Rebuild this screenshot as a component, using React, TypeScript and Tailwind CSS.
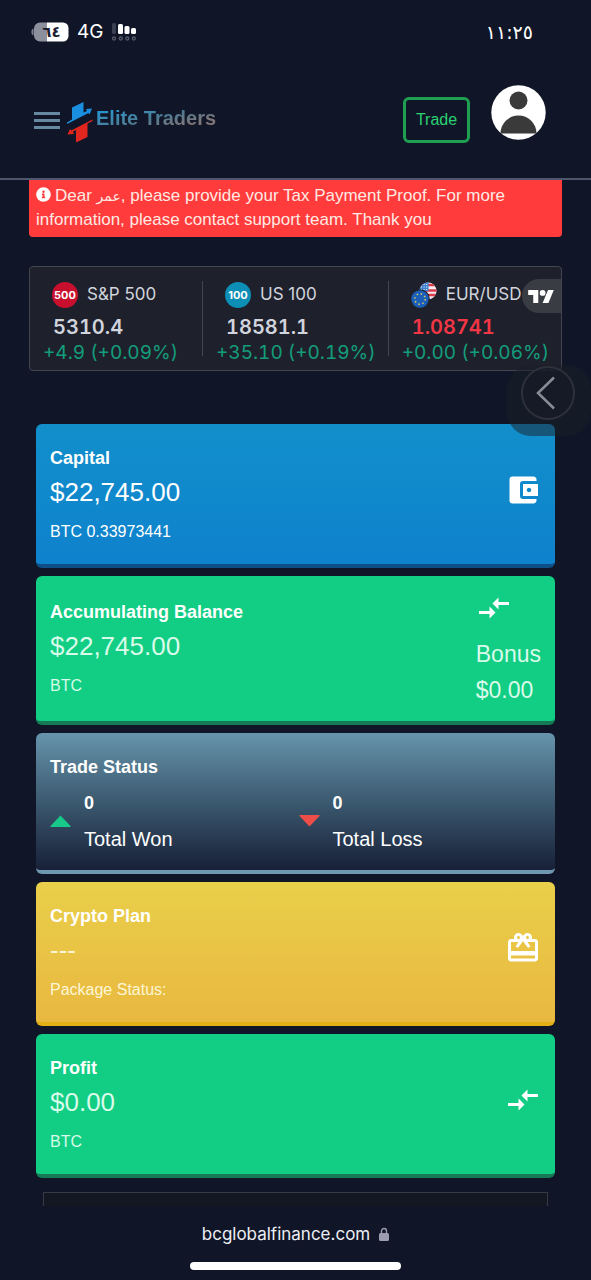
import type { ReactNode } from "react";
import { FaInfoCircle } from "react-icons/fa";
import { MdAccountBalanceWallet, MdCompareArrows, MdRedeem } from "react-icons/md";

function StatusBar() {
  return (
    <div className="flex h-16 items-center justify-between pr-[58px] pl-[31px]">
      <div className="flex items-center">
        <svg width="38" height="20" viewBox="0 0 38 20" aria-hidden="true">
          <path d="M2.500 6.500C1 7 .4 8.400.4 10s.6 3 2.100 3.500z" fill="#7d8290" />
          <path d="M9 .5h7v19H9a6 6 0 0 1-6-6v-7a6 6 0 0 1 6-6z" fill="#8b909c" />
          <path d="M16 .5h16a5.500 5.500 0 0 1 5.500 5.500v8a5.500 5.500 0 0 1-5.500 5.500H16z" fill="#fff" />
          <text x="20.500" y="15" textAnchor="middle" fontSize="15" fontWeight="700" fontFamily="DejaVu Sans, sans-serif" fill="#1b2030">
            ٦٤
          </text>
        </svg>
        <span className="ml-2 font-[Inter,sans-serif] text-[19px] leading-6 text-white">4G</span>
        <svg className="ml-2" width="28" height="20" viewBox="0 0 28 20" aria-hidden="true">
          <rect x="1" y="1" width="4" height="11" rx="1.500" fill="#3a4050" />
          <rect x="7" y="2" width="5" height="10" rx="1.500" fill="#fff" />
          <rect x="13.500" y="4" width="5" height="8" rx="1.500" fill="#fff" />
          <rect x="20" y="6" width="5" height="6" rx="1.500" fill="#fff" />
          <g fill="none" stroke="#555b69" strokeWidth="1.300">
            <circle cx="3" cy="16.500" r="1.500" />
            <circle cx="9.800" cy="16.500" r="1.500" />
            <circle cx="16.300" cy="16.500" r="1.500" />
            <circle cx="22.800" cy="16.500" r="1.500" />
          </g>
        </svg>
      </div>
      <time className="font-['DejaVu_Sans',sans-serif] text-[19px] leading-6 text-white">١١:٢٥</time>
    </div>
  );
}

function LogoMark() {
  return (
    <svg width="26" height="40" viewBox="0 0 26 40" aria-hidden="true">
      <path d="M5 5.500 16.500 0v10.500L20 9l-1-2 6-.5-2.500 6-1-1.500L0 22v-1.500l5-3z" fill="#1a8fe0" />
      <path d="M25.500 17.500V19L20.500 21.500v13.500L9 40.500V28L6 29.500l1 2.500-6.500.5L3 27l1.200 1.500z" fill="#e0261f" />
    </svg>
  );
}

function Header() {
  return (
    <header className="border-b-2 border-[#4d566c]">
      <StatusBar />
      <div className="flex h-[114px] items-start justify-between pr-[45px] pl-[34px]">
        <div className="flex items-center pt-[38px]">
          <button type="button" aria-label="Menu" className="-mt-1 flex w-[26px] flex-col gap-1">
            <span className="h-[3px] w-full bg-[#6688a0]" />
            <span className="h-[3px] w-full bg-[#6688a0]" />
            <span className="h-[3px] w-full bg-[#6688a0]" />
          </button>
          <a href="#home" className="ml-[7px] flex items-center gap-[3px]">
            <LogoMark />
            <span className="-mt-2 bg-linear-to-br from-[#129ad8] from-10% via-[#4c7a92] via-50% to-[#7f7678] to-75% bg-clip-text text-[20px] leading-7 font-bold text-transparent">
              Elite Traders
            </span>
          </a>
        </div>
        <div className="flex items-start gap-[21px] pt-[21px]">
          <button
            type="button"
            className="mt-3 h-[46px] w-[67px] rounded-md border-3 border-[#1f9f52] text-base text-[#2bd173]"
          >
            Trade
          </button>
          <button type="button" aria-label="Account">
            <svg width="55" height="55" viewBox="0 0 55 55" aria-hidden="true">
              <circle cx="27.500" cy="27.500" r="27.200" fill="#fff" />
              <circle cx="27.500" cy="15.500" r="9" fill="#3a3a3a" />
              <path d="M9.500 48.500a18 18 0 0 1 36 0z" fill="#3a3a3a" />
            </svg>
          </button>
        </div>
      </div>
    </header>
  );
}

function EuroDollarIcon() {
  return (
    <svg width="26" height="26" viewBox="0 0 26 26" aria-hidden="true">
      <defs>
        <clipPath id="usd">
          <circle cx="17" cy="9" r="8.500" />
        </clipPath>
      </defs>
      <g clipPath="url(#usd)">
        <rect x="8" width="18" height="18" fill="#f3eef2" />
        <path d="M8 3h18M8 8.500h18M8 13h18" stroke="#dc3a4c" strokeWidth="2.400" />
        <rect x="8" width="9.500" height="9" fill="#3d7fcf" />
        <path d="M10 2.500h7M10 5h7M10 7.500h7" stroke="#fff" strokeDasharray="1 1.600" />
      </g>
      <circle cx="9" cy="17" r="9.800" fill="#1e222d" />
      <circle cx="9" cy="17" r="8.700" fill="#1c5fb8" />
      <circle cx="9" cy="17" r="5.200" fill="none" stroke="#d9cf5a" strokeWidth="1.500" strokeDasharray="1.500 2.584" />
    </svg>
  );
}

function RoundBadge({ className, children }: { className: string; children: ReactNode }) {
  return (
    <span
      className={`flex size-[26px] items-center justify-center rounded-full text-[11px] font-bold text-white ${className}`}
    >
      {children}
    </span>
  );
}

type Quote = { name: string; price: string; change: string; down?: boolean; icon: ReactNode };

const quotes: Quote[] = [
  { name: "S&P 500", price: "5310.4", change: "+4.9 (+0.09%)", icon: <RoundBadge className="bg-[#c8102e]">500</RoundBadge> },
  { name: "US 100", price: "18581.1", change: "+35.10 (+0.19%)", icon: <RoundBadge className="bg-[#0c8eb5]">100</RoundBadge> },
  { name: "EUR/USD", price: "1.08741", change: "+0.00 (+0.06%)", down: true, icon: <EuroDollarIcon /> },
];

function Ticker() {
  return (
    <section
      aria-label="Market quotes"
      className="relative mx-[29px] mt-[29px] flex overflow-hidden rounded border border-[#434651] bg-[#1e212c] pt-[14px] pb-[5px] font-[Inter,sans-serif]"
    >
      {quotes.map((q) => (
        <div key={q.name} className="flex shrink-0">
          <div className="min-w-[172px] pr-3 pl-[13px] whitespace-nowrap">
            <div className="flex h-7 items-center gap-[9px] pl-[9px]">
              {q.icon}
              <span className="text-[17px] text-[#d1d4dc]">{q.name}</span>
            </div>
            <div
              className={`mt-1 pl-[10px] text-xl leading-7 font-semibold tabular-nums ${q.down ? "text-[#f23645]" : "text-[#d1d4dc]"}`}
            >
              {q.price}
            </div>
            <div className="text-[19px] leading-6 text-[#149d7b] tabular-nums">{q.change}</div>
          </div>
          {!q.down && <div className="h-[75px] w-px bg-[#434651]" />}
        </div>
      ))}
      <a
        href="#chart"
        aria-label="TradingView"
        className="absolute top-3 right-0 flex h-[34px] w-[39px] items-center rounded-l-full bg-[#3a3c44] pl-[6px]"
      >
        <svg width="26" height="13" viewBox="0 4 35.500 18" fill="#fff" aria-hidden="true">
          <path d="M14 22H7V11H0V4h14v18zM28 22h-8l7.500-18h8L28 22z" />
          <circle cx="20" cy="8" r="4" />
        </svg>
      </a>
    </section>
  );
}

function BackBubble() {
  return (
    <div className="absolute top-[185px] right-0 flex h-[71px] w-[84px] items-center justify-end rounded-[24px] bg-[#1a1d28]/50 pr-4 pb-[15px]">
      <button
        type="button"
        aria-label="Back"
        className="flex size-[54px] items-center justify-center rounded-full border-2 border-[#2e303a] bg-[#171b28]/70"
      >
        <svg className="mr-1" width="20" height="34" viewBox="0 0 20 34" fill="none" aria-hidden="true">
          <path d="M18 1.500 2 17l16 15.500" stroke="#8a8c95" strokeWidth="2.500" />
        </svg>
      </button>
    </div>
  );
}

type CardProps = {
  title: string;
  amount: string;
  note: string;
  className: string;
  textClass?: string;
  children: ReactNode;
};

function BalanceCard({ title, amount, note, className, textClass = "text-white", children }: CardProps) {
  return (
    <section className={`flex justify-between rounded-md border-b-4 px-[14px] ${className}`}>
      <div className={textClass}>
        <h2 className="text-lg leading-7 font-bold text-white">{title}</h2>
        <p className="text-[26px] leading-10">{amount}</p>
        <p className="text-base leading-10">{note}</p>
      </div>
      {children}
    </section>
  );
}

function TradeCount({ label, count, won }: { label: string; count: number; won?: boolean }) {
  return (
    <div className="flex items-center gap-[13px]">
      <svg width="21" height="12" viewBox="0 0 21 12" aria-hidden="true">
        {won ? (
          <path d="M10.500.5 20.500 11q.5 1-.5 1H1q-1 0-.5-1z" fill="#19c98a" />
        ) : (
          <path d="M10.500 11.500.5 1Q0 0 1 0h19q1 0 .5 1z" fill="#ef4d48" />
        )}
      </svg>
      <div>
        <p className="text-lg leading-9 font-bold">{count}</p>
        <p className="text-xl leading-9">{label}</p>
      </div>
    </div>
  );
}

export default function App() {
  return (
    <div className="min-h-screen bg-[#101627] font-['Liberation_Sans',Arial,sans-serif]">
      <Header />
      <main className="relative">
        <div role="alert" className="mx-[29px] rounded-b bg-[#ff3b3c] px-[7px] pt-1 pb-[5px] text-[17px] leading-6 text-[#ffe9e2]">
          <FaInfoCircle className="mr-1 mb-1 inline size-[15px] text-white" aria-hidden="true" />
          Dear <bdi className="font-['DejaVu_Sans',sans-serif] text-sm leading-5">عمر</bdi>, please provide your Tax
          Payment Proof. For more information, please contact support team. Thank you
        </div>

        <Ticker />

        <div className="mx-9 mt-[53px] flex flex-col gap-2">
          <BalanceCard
            title="Capital"
            amount="$22,745.00"
            note="BTC 0.33973441"
            className="items-center border-[#0d4f86] bg-linear-to-b from-[#128fcb] to-[#0f82cd] pt-5 pb-3"
          >
            <MdAccountBalanceWallet className="mb-4 size-9 text-white" aria-hidden="true" />
          </BalanceCard>

          <BalanceCard
            title="Accumulating Balance"
            amount="$22,745.00"
            note="BTC"
            textClass="text-[#d9fbe9]"
            className="border-[#147b56] bg-[#12cd84] pt-[22px] pb-[13px]"
          >
            <div className="-mt-2 text-[23px] leading-9 text-[#d9fbe9]">
              <MdCompareArrows className="mb-[10px] size-9 text-white" aria-hidden="true" />
              <p>Bonus</p>
              <p>$0.00</p>
            </div>
          </BalanceCard>

          <section className="rounded-md border-b-4 border-[#6f97b0] bg-linear-to-b from-[#6694ac] via-[#3c5a70] via-50% to-[#182138] px-[14px] pt-5 pb-[13px] text-white">
            <h2 className="text-lg leading-7 font-bold">Trade Status</h2>
            <div className="grid grid-cols-2 gap-[6px] pt-1">
              <TradeCount won label="Total Won" count={0} />
              <TradeCount label="Total Loss" count={0} />
            </div>
          </section>

          <BalanceCard
            title="Crypto Plan"
            amount="---"
            note="Package Status:"
            textClass="text-[#fdf6d5]"
            className="items-center border-[#e3b016] bg-linear-to-b from-[#e9cf4a] to-[#e9b840] pt-5 pb-3"
          >
            <MdRedeem className="mb-4 size-9 text-white" aria-hidden="true" />
          </BalanceCard>

          <BalanceCard
            title="Profit"
            amount="$0.00"
            note="BTC"
            textClass="text-[#d9fbe9]"
            className="items-center border-[#147b56] bg-[#12cd84] pt-5 pb-3"
          >
            <MdCompareArrows className="mb-4 size-9 text-white" aria-hidden="true" />
          </BalanceCard>
        </div>

        <div className="mx-[43px] mt-[14px] h-[14px] border-x border-t border-[#363a47] bg-[#131722]" />
        <BackBubble />
      </main>

      <footer className="flex flex-col items-center pt-4 pb-[11px]">
        <div className="flex items-center gap-[9px]">
          <span className="font-[Inter,sans-serif] text-[17px] leading-6 text-[#eceef5]">bcglobalfinance.com</span>
          <svg width="10" height="14" viewBox="0 0 10 14" aria-hidden="true">
            <path d="M2.500 7V4a2.500 2.500 0 0 1 5 0v3" fill="none" stroke="#9b9cae" strokeWidth="1.400" />
            <rect y="6" width="10" height="8" rx="1.500" fill="#9b9cae" />
          </svg>
        </div>
        <div className="mt-4 h-2 w-[211px] rounded-full bg-white" />
      </footer>
    </div>
  );
}
